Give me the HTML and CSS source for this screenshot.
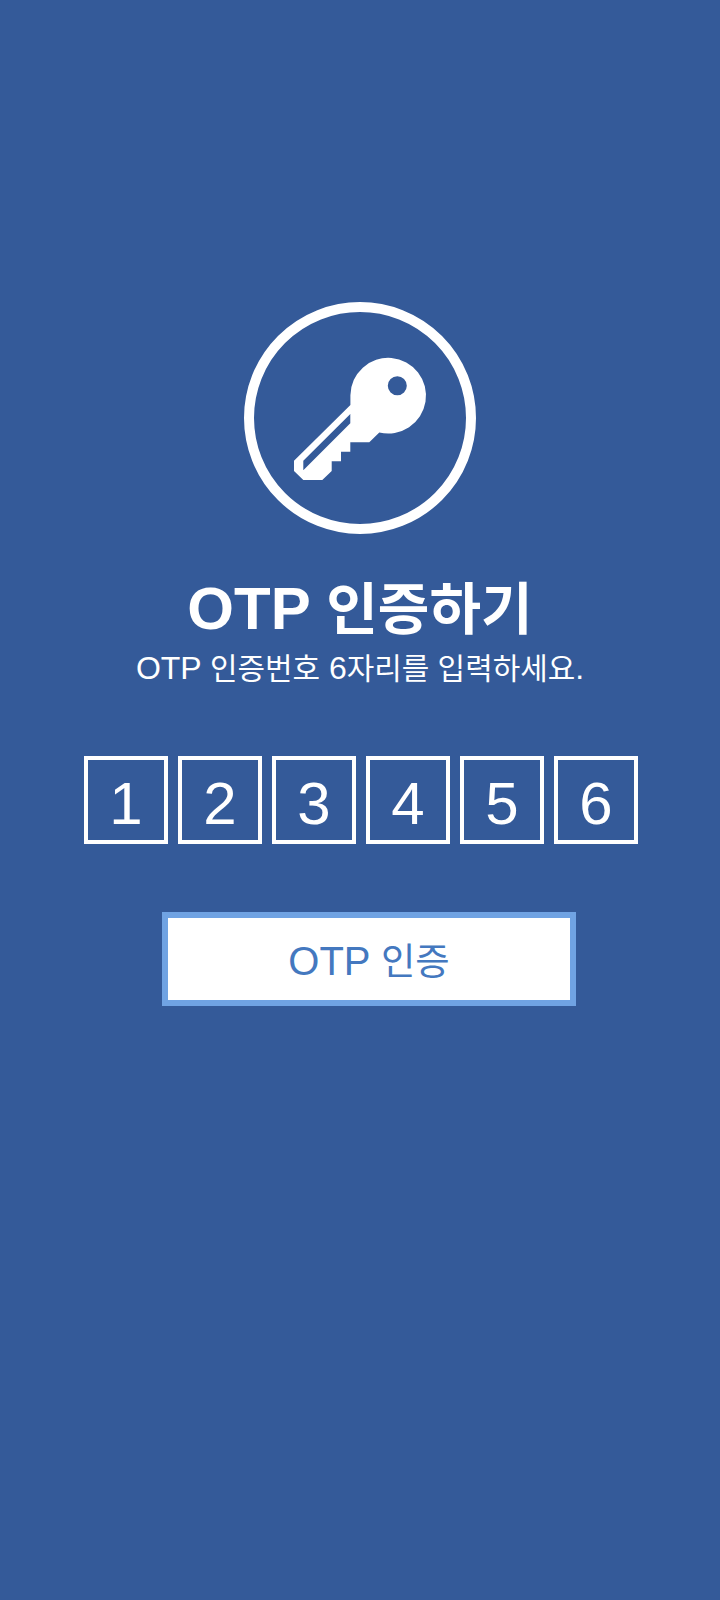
FILE: index.html
```html
<!DOCTYPE html>
<html lang="ko">
<head>
<meta charset="utf-8">
<title>OTP 인증하기</title>
<link rel="stylesheet" href="styles.css">
</head>
<body>
<main class="screen">
  <div class="badge">
    <svg class="key" viewBox="0 0 232 232" aria-hidden="true">
      <path fill-rule="evenodd" d="M106.400 103 L50 158.700 V169 L59.300 178 H78.300 L87.700 169 V159.300 H97 V149.700 H106.300 V140.300 H125.300 L135.300 130.400 A37.800 37.800 0 1 0 106.400 93.200 Z M106.300 112 L59.300 158.700 V168.300 L106.300 121.300 Z M153.300 83.700 m-9.500 0 a9.500 9.500 0 1 0 19 0 a9.500 9.500 0 1 0 -19 0 Z"/>
    </svg>
  </div>
  <h1 class="title">OTP <span class="ko">인증하기</span></h1>
  <p class="subtitle">OTP <span class="ko">인증번호</span> 6<span class="ko">자리를 입력하세요</span>.</p>
  <div class="digits">
    <div class="digit">1</div>
    <div class="digit">2</div>
    <div class="digit">3</div>
    <div class="digit">4</div>
    <div class="digit">5</div>
    <div class="digit">6</div>
  </div>
  <button class="verify" type="button">OTP <span class="ko">인증</span></button>
</main>
</body>
</html>
```
FILE: styles.css
```css
* { box-sizing: border-box; }
html, body { margin: 0; padding: 0; }
body {
  background: #345a99;
  color: #fff;
  font-family: "Liberation Sans", "Noto Sans CJK KR", sans-serif;
}
.screen {
  width: 720px;
  height: 1600px;
  padding-top: 302px;
  display: flex;
  flex-direction: column;
  align-items: center;
  overflow: hidden;
}
.badge {
  width: 232px;
  height: 232px;
  border: 10px solid #fff;
  border-radius: 50%;
  flex: none;
}
.key {
  display: block;
  width: 232px;
  height: 232px;
  margin: -10px;
  fill: #fff;
}
.ko { font-size: 0.935em; }
.title {
  margin: 39px 0 0;
  font-size: 60px;
  line-height: 71px;
  font-weight: 700;
}
.subtitle {
  margin: 0;
  font-size: 32px;
  line-height: 46px;
}
.digits {
  display: flex;
  gap: 10px;
  margin: 64px 0 0 2px;
}
.digit {
  width: 84px;
  height: 88px;
  border: 4px solid #fff;
  padding-top: 6px;
  display: flex;
  align-items: center;
  justify-content: center;
  font-size: 60px;
}
.verify {
  width: 414px;
  height: 94px;
  margin: 68px 0 0 18px;
  border: 6px solid #70a3e3;
  background: #fff;
  color: #4478bf;
  font-family: inherit;
  font-size: 40px;
  padding: 0;
}
```
